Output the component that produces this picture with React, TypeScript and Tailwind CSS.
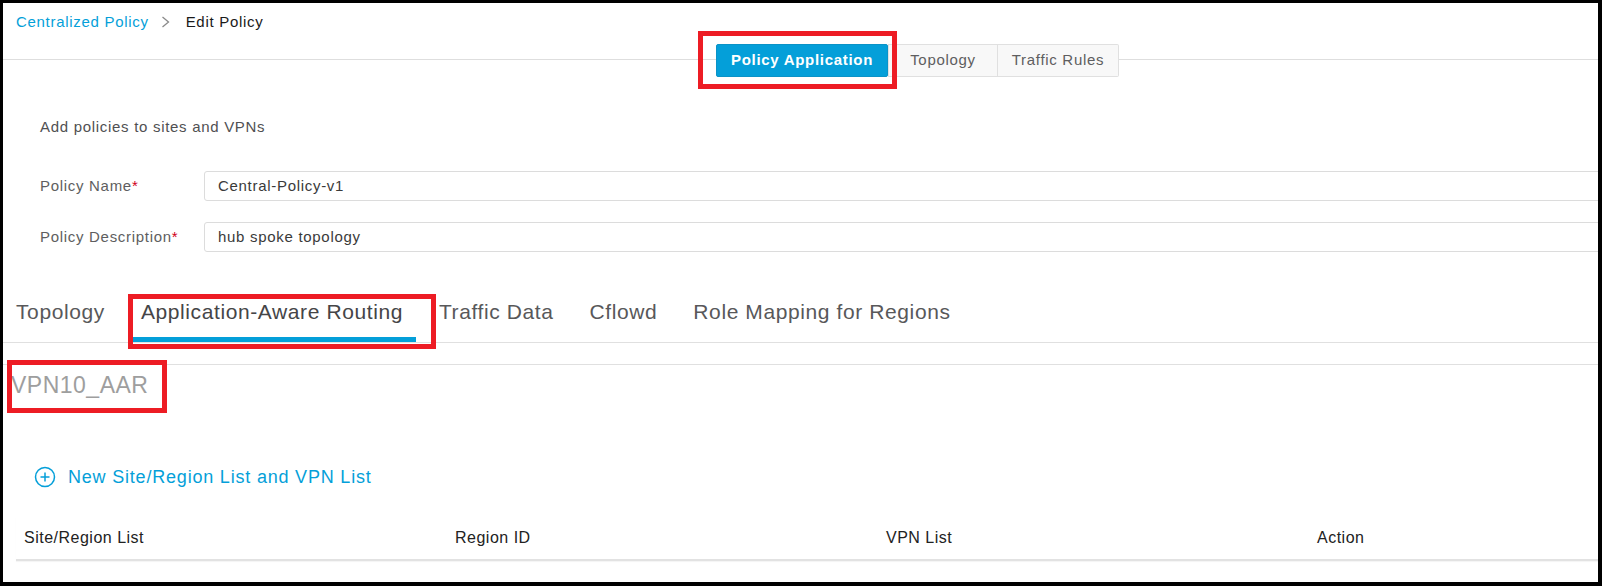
import React from 'react';

const tabs = ['Topology', 'Application-Aware Routing', 'Traffic Data', 'Cflowd', 'Role Mapping for Regions'];

function Field({ label, value }: { label: string; value: string }) {
  return (
    <div className="flex items-center h-[30px]">
      <div className="w-[164px] leading-[20px] text-[#5e5e60]">
        {label}
        <span className="text-[#d0021b]">*</span>
      </div>
      <div className="flex-1 -mr-[20px] h-[30px] flex items-center border border-[#dcdcdc] rounded-[3px] pl-[13px] text-[#3a3a3a]">
        {value}
      </div>
    </div>
  );
}

export default function App() {
  return (
    <div
      className="w-[1602px] h-[586px] bg-black pt-[3px] pl-[3px] pr-[4px] pb-[4px]"
      style={{ fontFamily: '"Liberation Sans", Arial, sans-serif' }}
    >
      <div className="relative h-full w-full bg-white overflow-hidden text-[15px] tracking-[0.7px]">
        {/* breadcrumb */}
        <div className="h-[37px] flex items-center pl-[13px] leading-[20px]">
          <span className="text-[#049fd9]">Centralized Policy</span>
          <svg className="ml-[12px]" width="9" height="12" viewBox="0 0 9 12" fill="none">
            <path d="M1.5 1l6 5-6 5" stroke="#8a8a8a" strokeWidth="1.3" />
          </svg>
          <span className="ml-[16px] text-[#1a1a1a]">Edit Policy</span>
        </div>

        {/* segmented control */}
        <div className="mt-[4px] flex items-start h-[33px]">
          <div className="mt-[15px] h-px w-[713px] bg-[#dedede]" />
          <button className="w-[172px] h-[33px] bg-[#049fd9] border border-[#0b93c7] rounded-[2px] text-white font-bold">
            Policy Application
          </button>
          <button className="w-[110px] h-[33px] bg-[#f8f8f8] border border-[#e0e0e0] text-[#5e5e60]">
            Topology
          </button>
          <button className="w-[121px] h-[33px] bg-[#f8f8f8] border border-l-0 border-[#e0e0e0] rounded-r-[2px] text-[#5e5e60]">
            Traffic Rules
          </button>
          <div className="mt-[15px] h-px flex-1 bg-[#dedede]" />
        </div>

        {/* form */}
        <div className="pl-[37px]">
          <p className="mt-[40px] leading-[20px] text-[#505052]">Add policies to sites and VPNs</p>
          <div className="mt-[34px]">
            <Field label="Policy Name" value="Central-Policy-v1" />
          </div>
          <div className="mt-[21px]">
            <Field label="Policy Description" value="hub spoke topology" />
          </div>
        </div>

        {/* tabs */}
        <div className="mt-[40px] flex gap-[10px] border-b border-[#e0e0e0] text-[21px] tracking-[0.6px]">
          {tabs.map((t, i) => (
            <div
              key={t}
              className={
                'px-[13px] pt-[6px] pb-[11px] leading-[28px] border-b-[5px] ' +
                (i === 1 ? 'border-[#049fd9] text-[#454547]' : 'border-transparent text-[#58585a]')
              }
            >
              {t}
            </div>
          ))}
        </div>

        {/* section */}
        <div className="mt-[21px] border-t border-[#e0e0e0] pt-[5px] pl-[8px]">
          <div className="text-[23px] leading-[30px] tracking-[0.5px] text-[#9e9e9e]">VPN10_AAR</div>
        </div>

        <div className="mt-[65px] pl-[30px] flex items-center h-[24px] text-[#049fd9]">
          <svg width="24" height="24" viewBox="0 0 24 24" fill="none" stroke="#049fd9" strokeWidth="1.5">
            <circle cx="12" cy="12" r="9.5" />
            <path d="M12 7.5v9M7.5 12h9" />
          </svg>
          <span className="ml-[11px] text-[18px] leading-[24px] tracking-[0.8px]">New Site/Region List and VPN List</span>
        </div>

        {/* table header */}
        <div className="mt-[28px] ml-[13px] grid grid-cols-[431px_431px_431px_1fr] h-[44px] border-b-2 border-[#e2e2e2] text-[16px] tracking-[0.5px] text-[#222] shadow-[0_1px_1px_rgba(0,0,0,0.04)]">
          {['Site/Region List', 'Region ID', 'VPN List', 'Action'].map((h) => (
            <div key={h} className="pl-[8px] flex items-center leading-[24px]">
              {h}
            </div>
          ))}
        </div>

        {/* annotation boxes */}
        <div className="absolute left-[695px] top-[28px] w-[199px] h-[58px] border-[5px] border-[#ed1c24]" />
        <div className="absolute left-[125px] top-[291px] w-[308px] h-[55px] border-[5px] border-[#ed1c24]" />
        <div className="absolute left-[4px] top-[357px] w-[160px] h-[53px] border-[5px] border-[#ed1c24]" />
      </div>
    </div>
  );
}
